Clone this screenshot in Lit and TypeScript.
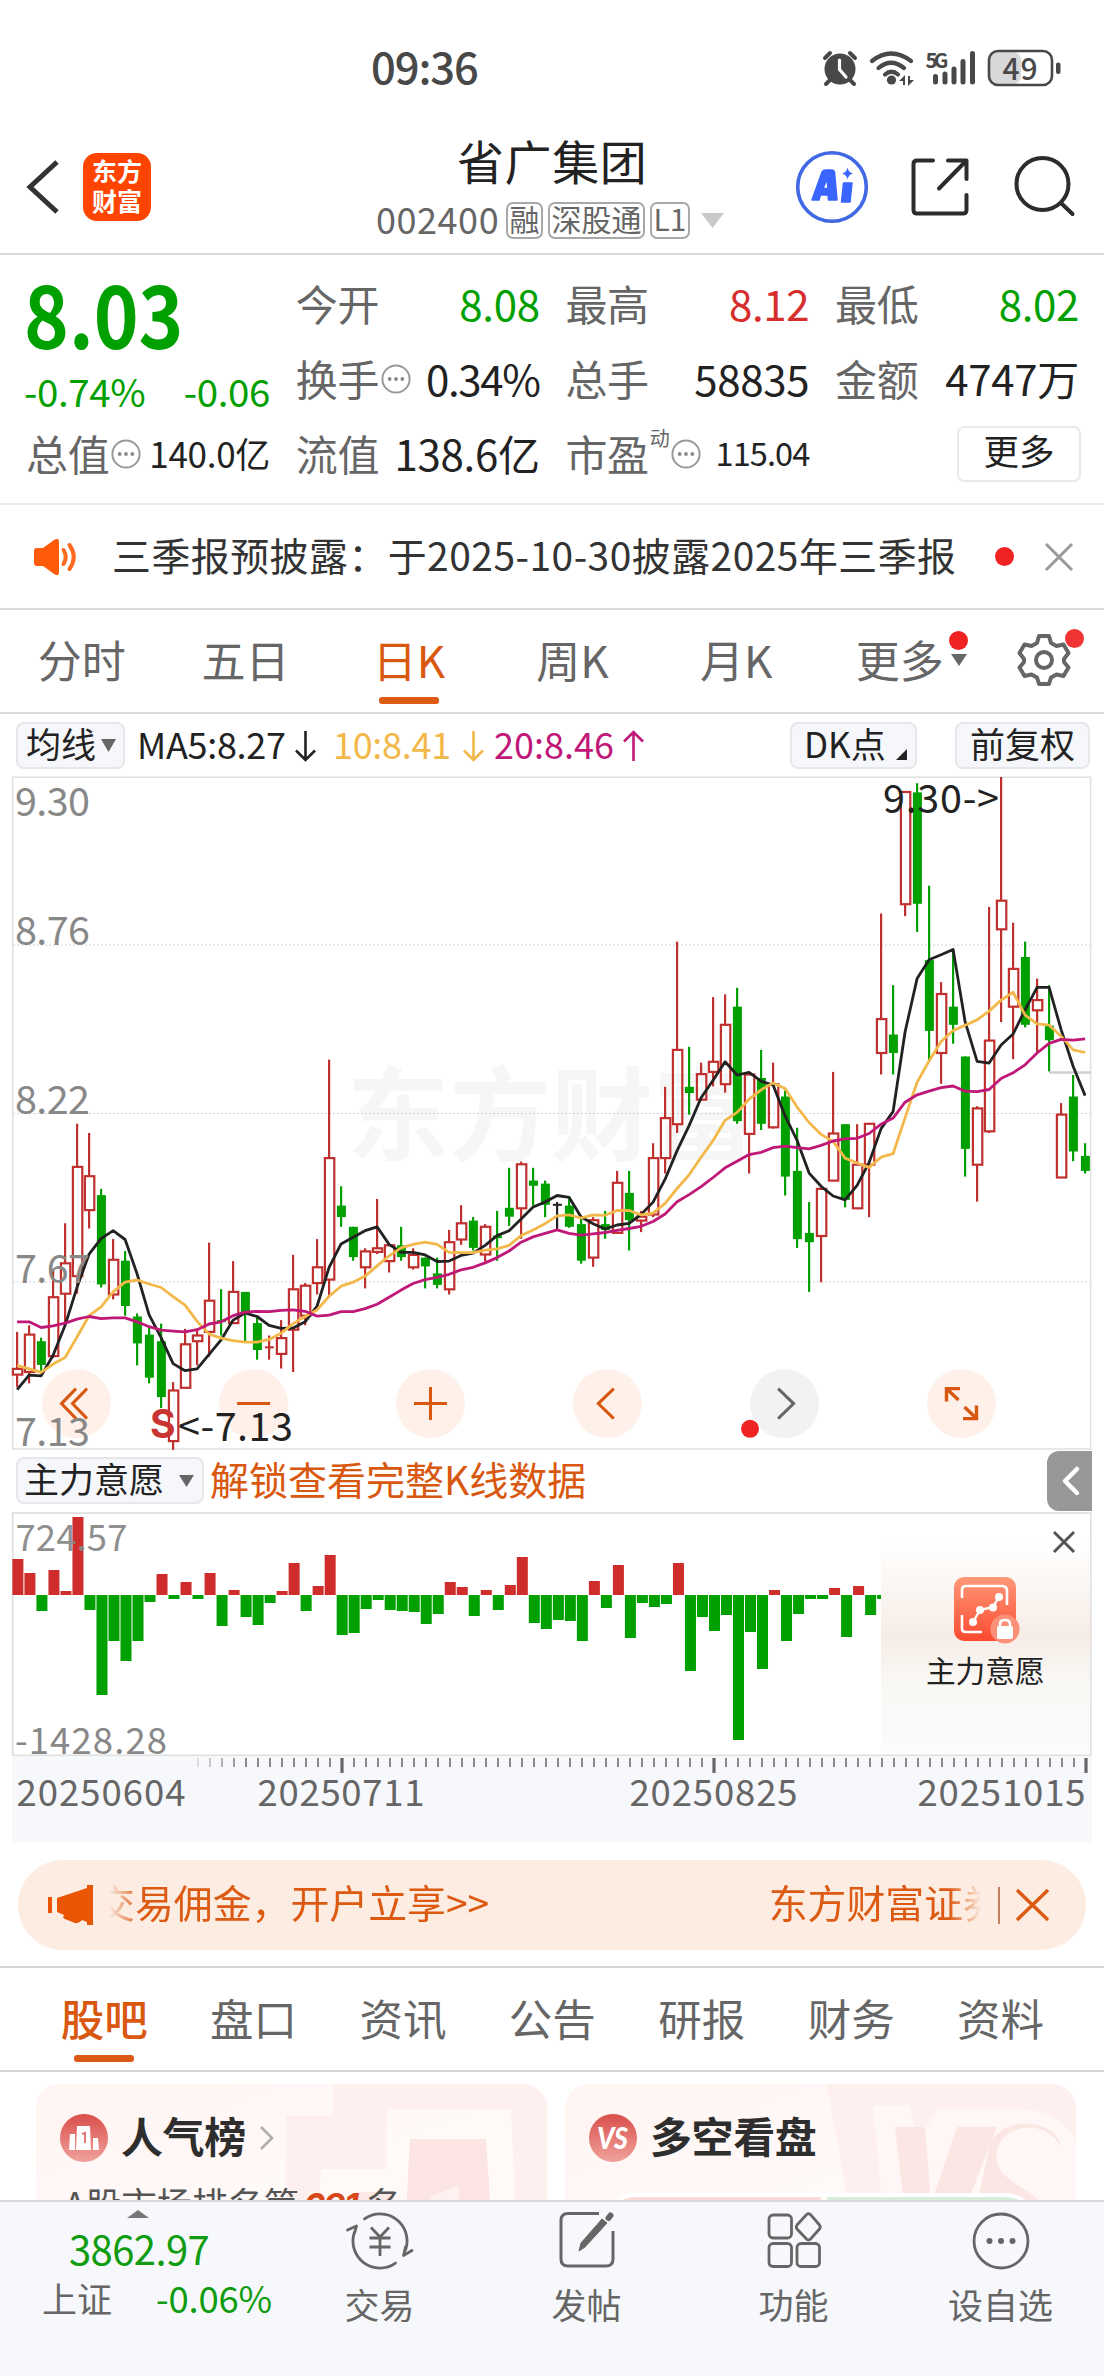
import { LitElement, html, svg, css } from "lit";
import { customElement } from "lit/decorators.js";

type Candle = [string, number, number, number, number];

// [kind, high, body top, body bottom, low] on the chart's own vertical units
const CANDLES: Candle[] = [
  ["r", 1277, 1361, 1374, 1402], ["r", 1262, 1283, 1368, 1394], ["g", 1290, 1298, 1352, 1365], ["r", 1137, 1198, 1332, 1336],
  ["r", 1030, 1121, 1190, 1262], ["r", 804, 902, 1150, 1190], ["r", 825, 923, 1000, 1042], ["g", 952, 966, 1169, 1176],
  ["r", 1066, 1113, 1192, 1203], ["g", 1093, 1115, 1218, 1240], ["g", 1235, 1242, 1303, 1353], ["g", 1268, 1283, 1381, 1394],
  ["g", 1258, 1298, 1425, 1450], ["r", 1391, 1410, 1525, 1545], ["r", 1270, 1305, 1404, 1404], ["r", 1272, 1285, 1298, 1353],
  ["r", 1074, 1206, 1277, 1333], ["g", 1180, 1250, 1254, 1285], ["r", 1116, 1186, 1257, 1257], ["g", 1186, 1186, 1235, 1300],
  ["g", 1240, 1257, 1318, 1340], ["r", 1285, 1312, 1312, 1340], ["r", 1250, 1291, 1327, 1360], ["r", 1102, 1180, 1272, 1368],
  ["r", 1166, 1172, 1240, 1262], ["r", 1066, 1130, 1166, 1192], ["r", 658, 882, 1158, 1197], ["g", 946, 990, 1016, 1038],
  ["g", 1038, 1038, 1107, 1115], ["r", 1087, 1094, 1130, 1178], ["r", 975, 1087, 1095, 1100], ["r", 1080, 1080, 1116, 1142],
  ["g", 1038, 1080, 1107, 1115], ["r", 1087, 1102, 1130, 1135], ["g", 1108, 1108, 1128, 1178], ["g", 1108, 1144, 1170, 1178],
  ["r", 1045, 1073, 1180, 1192], ["r", 989, 1030, 1067, 1079], ["g", 1016, 1024, 1086, 1092], ["r", 1032, 1038, 1101, 1117],
  ["g", 1002, 1058, 1064, 1115], ["g", 904, 995, 1015, 1036], ["r", 890, 896, 996, 1065], ["g", 904, 933, 945, 990],
  ["g", 933, 940, 988, 1016], ["k", 982, 988, 988, 1046], ["g", 970, 990, 1038, 1040], ["g", 1016, 1032, 1115, 1122],
  ["r", 1016, 1023, 1108, 1129], ["g", 1002, 1032, 1045, 1065], ["r", 911, 938, 1052, 1052], ["g", 911, 961, 1023, 1092],
  ["r", 1002, 1015, 1024, 1050], ["r", 848, 882, 1010, 1016], ["r", 720, 791, 882, 917], ["r", 390, 636, 805, 825],
  ["g", 629, 720, 734, 783], ["r", 665, 691, 749, 752], ["r", 516, 663, 686, 719], ["r", 510, 579, 714, 733],
  ["g", 495, 538, 798, 804], ["r", 690, 692, 827, 917], ["g", 636, 700, 804, 818], ["r", 665, 714, 812, 815],
  ["g", 728, 742, 924, 967], ["g", 813, 911, 1066, 1086], ["g", 982, 1052, 1073, 1186], ["r", 952, 952, 1059, 1164],
  ["r", 686, 826, 933, 933], ["g", 805, 805, 977, 994], ["r", 805, 897, 996, 996], ["r", 804, 804, 897, 1016],
  ["r", 326, 566, 643, 692], ["g", 489, 601, 643, 692], ["r", 50, 50, 305, 332], ["g", 30, 51, 304, 368],
  ["g", 263, 432, 593, 660], ["r", 482, 509, 643, 713], ["g", 410, 538, 579, 622], ["g", 651, 651, 861, 924],
  ["r", 764, 769, 897, 981], ["r", 311, 615, 821, 825], ["r", 16, 297, 362, 573], ["r", 347, 452, 538, 657],
  ["g", 390, 425, 579, 585], ["r", 474, 523, 546, 642], ["g", 489, 581, 614, 685], ["r", 757, 783, 926, 926],
  ["g", 693, 742, 867, 889], ["g", 848, 877, 911, 917],
];

const MA5 = [1408, 1375, 1377, 1330, 1262, 1175, 1100, 1065, 1047, 1067, 1145, 1238, 1290, 1349, 1365, 1361, 1328, 1295, 1250, 1234,
  1242, 1262, 1269, 1268, 1254, 1218, 1130, 1077, 1062, 1047, 1038, 1078, 1096, 1096, 1102, 1117, 1116, 1103, 1098, 1080, 1058, 1047,
  1020, 993, 982, 967, 971, 1016, 1031, 1043, 1034, 1030, 1010, 982, 930, 865, 808, 745, 705, 663, 693, 687, 707, 716, 786, 842, 916,
  946, 968, 977, 944, 892, 815, 776, 595, 474, 431, 420, 408, 572, 662, 666, 625, 600, 545, 494, 494, 590, 673, 740];
const MA10 = [1353, 1361, 1369, 1350, 1335, 1288, 1240, 1220, 1186, 1164, 1159, 1168, 1176, 1197, 1216, 1253, 1282, 1291, 1297, 1300,
  1300, 1294, 1280, 1258, 1242, 1227, 1196, 1173, 1164, 1150, 1127, 1104, 1086, 1078, 1073, 1078, 1096, 1097, 1097, 1091, 1088, 1080,
  1058, 1045, 1031, 1013, 1011, 1018, 1011, 1012, 1001, 1001, 1011, 1007, 985, 951, 920, 880, 842, 796, 778, 748, 727, 711, 724, 766,
  801, 828, 844, 882, 893, 903, 880, 872, 790, 710, 661, 617, 592, 580, 568, 548, 523, 505, 557, 577, 580, 605, 636, 642];
const MA20 = [1254, 1254, 1267, 1263, 1257, 1248, 1242, 1247, 1245, 1245, 1254, 1265, 1273, 1275, 1277, 1272, 1259, 1254, 1240, 1232,
  1230, 1231, 1228, 1227, 1230, 1241, 1239, 1231, 1231, 1224, 1214, 1198, 1182, 1167, 1158, 1153, 1146, 1136, 1130, 1120, 1108, 1093,
  1073, 1061, 1053, 1045, 1053, 1057, 1054, 1051, 1046, 1042, 1037, 1026, 1009, 981, 965, 947, 926, 904, 889, 874, 869, 858, 855, 858,
  861, 853, 843, 838, 837, 826, 805, 791, 755, 738, 730, 722, 718, 730, 731, 726, 701, 688, 670, 643, 621, 612, 614, 611];

// Signed bar lengths of the lower indicator, in pixels
const FLOW = [36, 22, -16, 25, 4, 78, -15, -100, -46, -66, -46, -7, 21, -4, 13, -4, 22, -31, 5, -22, -30, -8, 4, 32, -16, 9, 40, -40,
  -38, -14, -5, -15, -16, -17, -29, -19, 13, 8, -21, 5, -15, 10, 38, -28, -34, -25, -26, -46, 14, -13, 30, -43, -8, -12, -9, 32, -76,
  -22, -36, -20, -145, -37, -74, 5, -46, -19, -4, -4, 7, -42, 9, -20, -4];

const X = (i: number) => 17.1 + 12 * i;
const Y = (v: number) => Math.round((v * 0.44005 - 7) * 10) / 10;
const RED = "#c0302e";
const GREEN = "#00a000";

const line = (vals: number[], color: string) =>
  svg`<polyline points=${vals.map((v, i) => `${X(i)},${Y(v)}`).join(" ")} fill="none" stroke=${color} stroke-width="2.8" stroke-linejoin="round"/>`;

const candle = ([k, h, t, b, l]: Candle, i: number) => {
  const x = X(i), yt = Y(t), yb = Y(b);
  if (k === "g")
    return svg`<rect x=${x - 1.1} y=${Y(h)} width="2.2" height=${Y(l) - Y(h)} fill=${GREEN}/><rect x=${x - 4.2} y=${yt} width="9" height=${Math.max(2, yb - yt)} fill=${GREEN}/>`;
  if (k === "k" || t === b) {
    const c = k === "k" ? "#222" : RED;
    return svg`<rect x=${x - 1.1} y=${Y(h)} width="2.2" height=${Y(l) - Y(h)} fill=${c}/><rect x=${x - 4.2} y=${yt - 1} width="9" height="2" fill=${c}/>`;
  }
  return svg`<rect x=${x - 1.1} y=${Y(h)} width="2.2" height=${yt - Y(h)} fill=${RED}/><rect x=${x - 1.1} y=${yb} width="2.2" height=${Y(l) - yb} fill=${RED}/><rect x=${x - 4.2} y=${yt} width="9.4" height=${Math.max(1, yb - yt)} fill="none" stroke=${RED} stroke-width="2.2"/>`;
};

const info = html`<svg class="info" width="32" height="32" viewBox="0 0 32 32"><circle cx="16" cy="16" r="13.6" fill="none" stroke="#999" stroke-width="2"/><g fill="#888"><circle cx="9.7" cy="16" r="1.9"/><circle cx="16" cy="16" r="1.9"/><circle cx="22.3" cy="16" r="1.9"/></g></svg>`;

@customElement("app-root")
export class AppRoot extends LitElement {
  static styles = css`
    :host { display: block; width: 1104px; height: 2376px; overflow: hidden; background: #fff; color: #222;
      font-family: "Noto Sans CJK SC", sans-serif; font-size: 42px; line-height: 1; white-space: nowrap; }
    * { box-sizing: border-box; }
    svg { display: block; flex: none; overflow: visible; }
    .row { display: flex; align-items: center; }
    .status { height: 130px; padding: 0 46px 0 371px; color: #484848; }
    .clock { font-size: 43.5px; font-weight: 500; letter-spacing: -1.1px; height: 60px; line-height: 60px; width: 447.5px; margin-top: 2px; }
    .head { height: 125px; border-bottom: 2px solid #d9d9dc; padding-left: 26px; align-items: flex-start; }
    .logo { width: 68px; height: 68px; border-radius: 14px; background: #ff4400; color: #fff; margin: 23px 0 0 23px; flex: none;
      font-size: 25px; line-height: 30px; font-weight: 700; text-align: center; padding-top: 2px; }
    .logo div { height: 30px; }
    .name { width: 384px; flex: none; margin-left: 206px; }
    .title { font-size: 47px; line-height: 60px; height: 70px; margin-left: 100px; color: #222; letter-spacing: 0.6px; }
    .sub { color: #666; font-size: 36px; line-height: 36px; height: 38px; margin: 1px 0 0 19px; letter-spacing: 0.55px; }
    .code { width: 125px; margin-top: -4px; }
    .tag { border: 2px solid #a8a8a8; border-radius: 7px; height: 37px; font-size: 30px; line-height: 29px; padding: 0 1.5px; letter-spacing: 0; margin-left: 5px; }
    .quote { height: 250px; border-bottom: 2px solid #ececee; padding: 10px 26px 0; display: grid; grid-template-columns: repeat(4, 244px);
      column-gap: 25.7px; grid-template-rows: repeat(3, 75px); }
    .now { grid-row: span 2; color: #00a000; }
    .price { font-size: 87px; font-weight: 700; line-height: 90px; height: 93px; padding-top: 1px; transform: scaleX(0.875); transform-origin: 0 0; margin-left: -2px; }
    .chg { display: flex; justify-content: space-between; font-size: 38.5px; line-height: 50px; letter-spacing: -0.4px; margin: 7px 0 0 -2px; }
    .cell { display: flex; align-items: center; justify-content: space-between; color: #222; letter-spacing: -0.3px; }
    .cell .k { color: #666; display: flex; align-items: center; }
    .info { margin: 2px 0 0 1px; }
    .v { text-align: right; }
    .g { color: #00a000; }
    .r { color: #d62d2d; }
    .s35 { font-size: 35px; }
    .s33 { font-size: 32.5px; letter-spacing: -0.9px; }
    .sup { font-size: 20px; margin: -30px 0 0 1px; }
    .more { width: 124px; height: 56px; border: 2px solid #e8e9ec; border-radius: 7px; justify-self: end; margin: 11px -2px 0 0;
      font-size: 35.5px; line-height: 44px; text-align: center; }
    .notice { height: 105px; border-bottom: 2px solid #d9d9dc; padding: 0 30px 0 32px; }
    .ntext { font-size: 38.9px; width: 863px; margin-left: 31px; color: #333; height: 60px; line-height: 55px; letter-spacing: 0.5px; }
    .reddot { width: 19px; height: 19px; border-radius: 50%; background: #f02222; }
    .tabs { height: 104px; border-bottom: 2px solid #d9d9dc; color: #666; font-size: 44px; }
    .tab { width: 163.6px; height: 102px; line-height: 98px; text-align: center; position: relative; flex: none; }
    .on { color: #d9580f; font-weight: 500; }
    .on::after { content: ""; position: absolute; left: 50%; margin-left: -30px; bottom: 8px; width: 60px; height: 7px; border-radius: 3px; background: #dc5a12; }
    .tabs .dot { position: absolute; width: 19px; height: 19px; border-radius: 50%; background: #f02222; }
    .ma { height: 63px; padding: 0 14px 0 16px; font-size: 36px; }
    .btn { background: #f6f7fa; border: 2px solid #e6e7ea; border-radius: 8px; height: 47px; display: flex; align-items: center; color: #222; font-size: 35px; }
    .btn span { margin-top: -6px; }
    .ma b { font-weight: 400; display: flex; align-items: center; letter-spacing: -0.3px; margin-top: -5px; }
    .ma b svg { margin-top: 5px; }
    .ind { height: 63px; padding-left: 16px; color: #d9580f; font-size: 39px; }
    .side { margin-left: auto; margin-right: 12px; width: 45px; height: 60px; border-radius: 12px 0 0 12px; background: #989898; display: flex; align-items: center; padding-left: 15px; }
    .vol { height: 245px; position: relative; }
    .lock { position: absolute; left: 881px; top: 2px; width: 208.5px; height: 240px; display: flex; flex-direction: column; align-items: center;
      background: linear-gradient(#fff 10%, #fbf6f2 32%, #f6ece6 50%, #faf8f5 70%, #fdfbfb 100%); font-size: 29.7px; }
    .lock svg.ic { margin: 62px 0 0 1px; }
    .lock .x { position: absolute; right: 15px; top: 17px; }
    .lock div { margin-top: 11px; }
    .axis { height: 85px; margin: 0 12px; background: #f7f8fb; }
    .promo { margin: 18px 18px 0; height: 90px; border-radius: 45px; background: #fcece2; color: #dc5a12; font-size: 38.9px; padding: 0 20px 0 29px; }
    .mq { display: flex; justify-content: space-between; overflow: hidden; width: 874px; margin-left: 15px; height: 62px; line-height: 55px;
      -webkit-mask-image: linear-gradient(90deg, transparent 0, #000 32px, #000 840px, transparent 872px); }
    .mq span:first-child { margin-left: -13px; }
    .mq span:last-child { margin-right: -19px; }
    .div { width: 1.5px; height: 37px; background: #c08060; margin: 0 16px 0 15px; }
    .nav { margin-top: 16px; border-top: 2px solid #d6d6da; border-bottom: 2px solid #d6d6da; height: 106px; padding-left: 29.5px; color: #666; font-size: 43.5px; }
    .nav .tab { width: 149.4px; line-height: 100px; height: 102px; }
    .cards { display: flex; gap: 18px; padding: 12px 28px 0 36px; height: 128px; overflow: hidden; }
    .card { width: 511px; height: 240px; flex: none; border-radius: 24px; background: linear-gradient(160deg, #fff5f3, #fffaf8 55%); position: relative; overflow: hidden; padding: 27px 0 0 24px; color: #2e2e2e; }
    .deco { position: absolute; left: 0; top: 0; }
    .ct { font-size: 42px; font-weight: 700; position: relative; height: 54px; line-height: 46px; }
    .ct span { margin: -7px 14px 0 13px; letter-spacing: -0.4px; }
    .rank { position: relative; font-size: 35.6px; color: #555; margin: 12px 0 0 4px; line-height: 52px; }
    .rank i { color: #d8481a; font-weight: 700; font-size: 34px; font-family: Inter, sans-serif; letter-spacing: -1.6px; margin: 0 9px 0 4px; }
    .foot { height: 176px; background: #f7f8fb; border-top: 2px solid #d6d8dc; display: flex; color: #666; font-size: 35px; }
    .idx { width: 276px; color: #109c10; position: relative; padding-top: 8px; }
    .idx .n { font-size: 40px; letter-spacing: -0.6px; line-height: 60px; height: 47px; margin: 0 0 0 69px; }
    .idx .m { display: flex; justify-content: space-between; margin: 7px 4px 0 42px; line-height: 52px; }
    .idx .m span:first-child { color: #666; }
    .idx .m span:last-child { font-size: 36.5px; letter-spacing: -0.2px; }
    .act { width: 207px; display: flex; flex-direction: column; align-items: center; padding-top: 8px; }
    .act span { line-height: 52px; margin-top: 8px; }
  `;

  chart() {
    const btn = (cx: number, icon: unknown, fill = "#ffefe7") => svg`<circle cx=${cx} cy="626.6" r="34.5" fill=${fill} fill-opacity="0.92"/><g transform="translate(${cx},626.6)" fill="none" stroke="#d9580f" stroke-width="3">${icon}</g>`;
    const labels: [string, number][] = [["9.30", 38.5], ["8.76", 168], ["8.22", 337], ["7.67", 505.5], ["7.13", 668.5]];
    return html`<svg width="1104" height="672" viewBox="0 0 1104 672" font-family="Noto Sans CJK SC, sans-serif">
      <text x="347" y="376" font-size="102" font-weight="700" fill="#f6f6f6" textLength="408">东方财富</text>
      ${[168, 336.5, 505].map((y) => svg`<line x1="13" x2="1090" y1=${y} y2=${y} stroke="#d2d2d2" stroke-width="1" stroke-dasharray="2 2"/>`)}
      <rect x="12.7" y="0.2" width="1078" height="671.8" fill="none" stroke="#e2e2e4" stroke-width="1.6"/>
      <line x1="1049" x2="1091" y1="295.5" y2="295.5" stroke="#cdcfd3" stroke-width="2.4"/>
      ${CANDLES.map(candle)}
      ${line(MA5, "#222")}${line(MA10, "#f3b84a")}${line(MA20, "#bf1878")}
      ${btn(76.5, svg`<path d="M-0.5-15L-15 0L-0.5 15M10.5-15L-4 0L10.5 15"/>`)}
      ${btn(253.6, svg`<path d="M-16.5 0H16.5"/>`)}
      ${btn(430.5, svg`<path d="M-16.5 0H16.5M0-16.5V16.5"/>`)}
      ${btn(607.3, svg`<path d="M6.5-15L-9 0L6.5 15"/>`)}
      ${btn(784.6, svg`<path stroke="#666" d="M-6.5-15L9 0L-6.5 15"/>`, "#f1f1f1")}
      ${btn(961.5, svg`<path stroke-width="3.4" d="M-15-2V-15H-1.5M-14.5-14.5L-3-3.5M15 2V15H1.5M14.5 14.5L3 3.5"/>`)}
      <circle cx="750" cy="651.8" r="9" fill="#f02222"/>
      ${labels.map(([t, y]) => svg`<text x="15" y=${y} font-size="39.5" fill="#888" textLength="75" lengthAdjust="spacing">${t}</text>`)}
      <text x="883" y="36" font-size="39.5" fill="#222" textLength="116">9.30-&gt;</text>
      <text x="178" y="664" font-size="39.5" fill="#222" textLength="115">&lt;-7.13</text>
      <text x="150" y="660.5" font-size="39" font-weight="700" font-family="Inter, sans-serif" fill="#c93532">S</text>
    </svg>`;
  }

  volume() {
    return html`<div class="vol"><svg width="1104" height="245" viewBox="0 0 1104 245" font-family="Noto Sans CJK SC, sans-serif">
      <rect x="12.7" y="1" width="1078" height="242.4" fill="none" stroke="#e0e0e2" stroke-width="1.8"/>
      ${FLOW.map((v, i) => svg`<rect x=${12.4 + 12.01 * i} y=${v > 0 ? 83 - v : 83} width="11" height=${Math.abs(v)} fill=${v > 0 ? "#cf2d2b" : GREEN}/>`)}
      <text x="15.5" y="39" font-size="36.5" fill="#888" fill-opacity="0.95" textLength="112">724.57</text>
      <text x="15" y="242" font-size="36.5" fill="#888" textLength="152">-1428.28</text>
      </svg>
      <div class="lock">
        <svg class="x" width="22" height="22" viewBox="0 0 22 22"><path d="M1 1L21 21M21 1L1 21" stroke="#555" stroke-width="3"/></svg>
        <svg class="ic" width="66" height="68" viewBox="0 0 66 68">
          <defs><linearGradient id="lg" x2="0" y2="1"><stop stop-color="#ff9878"/><stop offset="1" stop-color="#fb4a30"/></linearGradient></defs>
          <rect x="1" y="1" width="62" height="64" rx="10" fill="url(#lg)"/>
          <path d="M9 22V14Q9 10 13 10H49Q54 10 54 15V29M9 39V53Q9 56 13 56H29" fill="none" stroke="#fff" stroke-width="2.6"/>
          <path d="M20 46L27 34L40 31L46 21" fill="none" stroke="#fff" stroke-width="2.4"/>
          <g fill="#fff"><circle cx="20" cy="46" r="4"/><circle cx="27" cy="34" r="4"/><circle cx="40" cy="31.5" r="4"/><circle cx="46" cy="21" r="4"/></g>
          <circle cx="52" cy="53" r="14.5" fill="#fb9079"/><rect x="44" y="50" width="16" height="13" rx="2" fill="#fff"/>
          <path d="M47 51V48Q47 44 52 44T57 48V51" fill="none" stroke="#fff" stroke-width="2.6"/>
        </svg>
        <div>主力意愿</div>
      </div>
    </div>
    <div class="axis"><svg width="1080" height="85" viewBox="12 0 1080 85" font-family="Noto Sans CJK SC, sans-serif">
      ${Array.from({ length: 75 }, (_, k) => {
        const big = k === 12 || k === 43 || k === 74;
        return svg`<rect x=${198 + 12.0 * k - (big ? 1.6 : 1)} y="1" width=${big ? 3.2 : 2} height=${big ? 15 : 9} fill=${big ? "#666" : "#888"} opacity=${Math.min(1, 0.25 + k * 0.19)}/>`;
      })}
      <g font-size="36.5" fill="#666">
      <text x="16.5" y="49" textLength="169">20250604</text><text x="257.5" y="49" textLength="167">20250711</text>
      <text x="629.5" y="49" textLength="168">20250825</text><text x="917.5" y="49" textLength="168">20251015</text></g>
    </svg></div>`;
  }

  render() {
    return html`
      <div class="status row">
        <div class="clock">09:36</div>
        <svg width="240" height="38" viewBox="0 0 240 38" fill="#484848" style="margin-top:6px">
          <circle cx="22" cy="20" r="15.5"/><path d="M13 30L8 35M31 30L36 35M7 9L12 4M37 9L32 4" stroke="#484848" stroke-width="4" stroke-linecap="round"/>
          <path d="M21.5 11V20.5L28 28" stroke="#fff" stroke-width="3.2" fill="none" stroke-linecap="round"/>
          <g fill="none" stroke="#484848" stroke-width="4.2" stroke-linecap="round"><path d="M54 12Q73-3 93 12"/><path d="M60.5 19Q73 8.5 86 19"/><path d="M67 25.5Q73.5 20 80 25.5"/></g>
          <circle cx="73.5" cy="31" r="4.6"/><path d="M81 32L87 26V36H85V32ZM96 31L90 37V27H92V31Z"/>
          <text x="107.5" y="18.5" font-size="20.5" font-weight="700" font-family="Noto Sans CJK SC, sans-serif" textLength="23">5G</text>
          <g stroke="#484848" stroke-width="5" stroke-linecap="round"><path d="M117.5 27.5V33M127 25V33M136 20V33M145 12.5V33M154.5 4.5V33"/></g>
          <rect x="172" y="3" width="31" height="32" rx="8" fill="#d8d8d8"/><rect x="171" y="2" width="63" height="34" rx="9" fill="none" stroke="#484848" stroke-width="2.6"/>
          <rect x="238" y="13.5" width="4.5" height="11.5" rx="2"/>
          <text x="184.5" y="30.5" font-size="30" font-weight="500" font-family="Noto Sans CJK SC, sans-serif" textLength="35">49</text>
        </svg>
      </div>
      <div class="head row">
        <svg width="34" height="56" viewBox="0 0 34 56" style="margin-top:29px"><path d="M31 3L4 28L31 53" fill="none" stroke="#333" stroke-width="5"/></svg>
        <div class="logo"><div>东方</div><div>财富</div></div>
        <div class="name">
          <div class="title">省广集团</div>
          <div class="sub row"><div class="code">002400</div><span class="tag">融</span><span class="tag">深股通</span><span class="tag">L1</span>
            <svg width="24" height="15" viewBox="0 0 24 15" style="margin-left:11px"><path d="M0 0H23L11.5 15Z" fill="#c9c9c9"/></svg></div>
        </div>
        <svg width="290" height="74" viewBox="0 0 290 74" style="margin:20px 0 0 54px">
          <circle cx="37" cy="37" r="34.3" fill="none" stroke="#4068e4" stroke-width="3.6"/>
          <path d="M17 50L27 22Q28 20 31 20H37Q39 20 39.5 22L42 50H33.5L33 45H25.5L24 50ZM28 38.5H33L32 29Z" fill="#3a66ff" stroke="#3a66ff" stroke-width="1.5" stroke-linejoin="round"/>
          <path d="M48.5 33H57L55 52H46.5Z" fill="#3a66ff" stroke="#3a66ff" stroke-width="1.5" stroke-linejoin="round"/><path d="M52.5 17.5Q53.5 22.5 58 23.5Q53.5 24.5 52.5 29.5Q51.5 24.5 47 23.5Q51.5 22.5 52.5 17.5Z" fill="#3a66ff"/>
          <g fill="none" stroke="#2c2c2c" stroke-width="4" stroke-linecap="round" stroke-linejoin="round"><path d="M138 10.5H122Q118.5 10.5 118.5 14V60Q118.5 63.5 122 63.5H168Q171.5 63.5 171.5 60V45M153 10.5H171.5V29M170 12L144 38.5"/>
          <circle cx="247.5" cy="34" r="26"/><path d="M266 53L277.5 64"/></g>
        </svg>
      </div>
      <div class="quote">
        <div class="now"><div class="price">8.03</div><div class="chg"><span>-0.74%</span><span>-0.06</span></div></div>
        <div class="cell"><span class="k">今开</span><span class="v g">8.08</span></div>
        <div class="cell"><span class="k">最高</span><span class="v r">8.12</span></div>
        <div class="cell"><span class="k">最低</span><span class="v g">8.02</span></div>
        <div class="cell"><span class="k">换手${info}</span><span class="v" style="letter-spacing:-1.3px">0.34%</span></div>
        <div class="cell"><span class="k">总手</span><span class="v">58835</span></div>
        <div class="cell"><span class="k">金额</span><span class="v">4747万</span></div>
        <div class="cell"><span class="k">总值${info}</span><span class="v s35">140.0亿</span></div>
        <div class="cell"><span class="k">流值</span><span class="v">138.6亿</span></div>
        <div class="cell"><span class="k">市盈<span class="sup">动</span>${info}</span><span class="v s33">115.04</span></div>
        <div class="more">更多</div>
      </div>
      <div class="notice row">
        <svg width="49" height="38" viewBox="0 0 49 38"><path d="M2 13Q2 10 5 10H11L22 2Q27-1 27 4V34Q27 39 22 36L11 28H5Q2 28 2 25Z" fill="#ff5a0a"/><path d="M31.5 12Q36 19 31.5 26M37.5 7Q46 19 37.5 31" fill="none" stroke="#ff6a20" stroke-width="4" stroke-linecap="round"/></svg>
        <div class="ntext">三季报预披露：于2025-10-30披露2025年三季报</div>
        <div class="reddot" style="margin-left:20px"></div>
        <svg width="28" height="28" viewBox="0 0 28 28" style="margin-left:31px"><path d="M1 1L27 27M27 1L1 27" stroke="#999" stroke-width="3"/></svg>
      </div>
      <div class="tabs row">
        <div class="tab">分时</div><div class="tab">五日</div><div class="tab on" style="font-weight:400">日K</div><div class="tab">周K</div><div class="tab">月K</div>
        <div class="tab">更多<span class="dot" style="left:131px;top:21px"></span></div>
        <svg width="16" height="12" viewBox="0 0 16 12" style="margin:-3px 0 0 -31px"><path d="M0 0H16L8 12Z" fill="#666"/></svg>
        <svg width="54" height="52" viewBox="0 0 54 52" style="margin:-3px 0 0 50px"><path d="M22 2H32L34 9L39.5 12L46.5 10.5L51.5 19L47 25V28L51.5 33.5L46.5 42L39.5 40.5L34 43.5L32 50H22L20 43.5L14.5 40.5L7.5 42L2.5 33.5L7 28V25L2.5 19L7.5 10.5L14.5 12L20 9Z" fill="none" stroke="#666" stroke-width="4" stroke-linejoin="round"/><circle cx="27" cy="26" r="8" fill="none" stroke="#666" stroke-width="4"/><circle cx="57.5" cy="4.5" r="9.5" fill="#f03434"/></svg>
      </div>
      <div class="ma row">
        <div class="btn" style="width:109px;padding-left:8px"><span>均线</span><svg width="15" height="13" viewBox="0 0 15 13" style="margin-left:5px"><path d="M0 0H15L7.5 13Z" fill="#666"/></svg></div>
        <b style="margin-left:12px;width:196px">MA5:8.27<svg width="21" height="32" viewBox="0 0 21 32" style="margin-left:9px"><path d="M10.5 1V30M1 20.5L10.5 30L20 20.5" fill="none" stroke="#222" stroke-width="2.6"/></svg></b>
        <b style="color:#f3b84a;width:161px">10:8.41<svg width="21" height="32" viewBox="0 0 21 32" style="margin-left:12px"><path d="M10.5 1V30M1 20.5L10.5 30L20 20.5" fill="none" stroke="#f3b84a" stroke-width="2.6"/></svg></b>
        <b style="color:#bf1878;letter-spacing:0">20:8.46<svg width="21" height="32" viewBox="0 0 21 32" style="margin-left:9px"><path d="M10.5 31V2M1 11.5L10.5 2L20 11.5" fill="none" stroke="#bf1878" stroke-width="2.6"/></svg></b>
        <div class="btn" style="margin-left:auto;width:127px;padding-left:12px"><span>DK点</span><svg width="11" height="11" viewBox="0 0 11 11" style="margin:17px 0 0 10px"><path d="M11 0V11H0Z" fill="#222"/></svg></div>
        <div class="btn" style="margin-left:38px;width:135px;padding-left:13px"><span>前复权</span></div>
      </div>
      ${this.chart()}
      <div class="ind row">
        <div class="btn" style="width:188px;padding-left:6px;margin-right:6px"><span>主力意愿</span><svg width="15" height="12" viewBox="0 0 15 12" style="margin-left:15px"><path d="M0 0H15L7.5 12Z" fill="#666"/></svg></div>
        <span style="margin-top:-4px">解锁查看完整K线数据</span>
        <div class="side"><svg width="18" height="28" viewBox="0 0 18 28"><path d="M15 2L3 14L15 26" fill="none" stroke="#fff" stroke-width="4.5" stroke-linecap="round" stroke-linejoin="round"/></svg></div>
      </div>
      ${this.volume()}
      <div class="promo row">
        <svg width="47" height="40" viewBox="0 0 47 40" fill="#ea5504"><rect x="1" y="12" width="4" height="16"/><path d="M10 13L40 3V0H46V40H40V37L35 35Q32 39 28 38L18 34Q15 33 17 30L10 27Z"/></svg>
        <div class="mq"><span>交易佣金，开户立享&gt;&gt;</span><span>东方财富证券</span></div>
        <div class="div"></div>
        <svg width="33" height="32" viewBox="0 0 33 32"><path d="M1 1L32 31M32 1L1 31" stroke="#dc5a12" stroke-width="3.4"/></svg>
      </div>
      <div class="nav row">
        <div class="tab on">股吧</div><div class="tab">盘口</div><div class="tab">资讯</div><div class="tab">公告</div><div class="tab">研报</div><div class="tab">财务</div><div class="tab">资料</div>
      </div>
      <div class="cards">
        <div class="card">
          <svg class="deco" width="511" height="130" viewBox="0 0 511 130"><path d="M250 32H297V0H511V130H480L475 25H350V85H285L282 130H250Z" fill="#fdf0ee"/><path d="M374 55H450L455 130H370Z" fill="#fbe4e1"/><path d="M395 112L423 102V130H395Z" fill="#fef2f0"/><path d="M320 108H358V130H320Z" fill="#fbe8e4"/></svg>
          <div class="ct row"><svg width="48" height="48" viewBox="0 0 48 48"><defs><linearGradient id="rg" x2="0" y2="1"><stop stop-color="#d94f4b"/><stop offset="1" stop-color="#f0a29d"/></linearGradient></defs><circle cx="24" cy="24" r="24" fill="url(#rg)"/><path d="M10 20H15V36H9ZM17 12H30L31 36H16ZM33 24H38L39 36H33Z" fill="#fff"/><path d="M22 20L25 19V29" fill="none" stroke="#e27b76" stroke-width="2"/></svg>
            <span>人气榜</span><svg width="14" height="24" viewBox="0 0 14 24"><path d="M1 1L12 12L1 23" fill="none" stroke="#b0aeae" stroke-width="2.6"/></svg></div>
          <div class="rank">A股市场排名第<i>691</i>名</div>
        </div>
        <div class="card">
          <svg class="deco" width="511" height="130" viewBox="0 0 511 130"><path d="M262 0H511V130H285Z" fill="#fdf0ee"/><path d="M308 22H345L352 60L372 25H430Q500 20 511 60V130H318Z" fill="#fef7f5"/><path d="M330 43H360L366 120L392 43H432L398 130H340Z" fill="#fbe6e3"/><path d="M496 62Q480 40 458 44Q428 50 432 80Q436 92 460 106Q480 118 484 130H456Q455 118 430 110L410 130L425 60Q436 38 465 40Q490 42 496 62Z" fill="#fbe6e3"/>
            <rect x="41" y="109" width="430" height="60" rx="30" fill="#fff"/><path d="M72 113H256V130H46Q52 113 72 113Z" fill="#fbd9d6"/><path d="M262 113H440Q460 113 466 130H261Z" fill="#d8eedb"/></svg>
          <div class="ct row"><svg width="48" height="48" viewBox="0 0 48 48"><circle cx="24" cy="24" r="24" fill="url(#rg2)"/><defs><linearGradient id="rg2" x2="0" y2="1"><stop stop-color="#d94f4b"/><stop offset="1" stop-color="#f0a29d"/></linearGradient></defs><text x="8" y="35" font-size="31" font-weight="900" font-style="italic" fill="#fff" font-family="Lato, sans-serif" textLength="31" lengthAdjust="spacingAndGlyphs">VS</text></svg>
            <span>多空看盘</span></div>
        </div>
      </div>
      <div class="foot">
        <div class="idx"><svg width="22" height="8" viewBox="0 0 22 8" style="margin-left:127px"><path d="M0 8L11 0L22 8Z" fill="#777"/></svg>
          <div class="n">3862.97</div><div class="m"><span>上证</span><span>-0.06%</span></div></div>
        <div class="act"><svg width="66" height="60" viewBox="0 0 66 60" fill="none" stroke="#666" stroke-width="2.8" stroke-linecap="round"><path d="M17.5 8.9A27 27 0 0 1 58.5 40M48.5 53.1A27 27 0 0 1 7.5 22M0.5 20L9.5 16L7.5 23M58.5 37L56.5 45.5L65 40.5" stroke-linejoin="round"/><path d="M24 17.5L33 27L42 17.5M22.5 28H43.5M22.5 37H43.5M33 27V46" stroke-linecap="butt"/></svg><span>交易</span></div>
        <div class="act"><svg width="56" height="60" viewBox="0 0 56 60" fill="none" stroke="#666" stroke-width="3"><path d="M40 3.5H9Q2 3.5 2 10.5V49Q2 56 9 56H47Q54 56 54 49V21"/><path d="M20 41L22 33L43 9L48 13L26 37Z" fill="#666" stroke-width="1"/><path d="M49.5 8L51.5 5.5" stroke-width="6" stroke-linecap="round"/></svg><span>发帖</span></div>
        <div class="act"><svg width="56" height="60" viewBox="0 0 56 60" fill="none" stroke="#666" stroke-width="2.8"><rect x="3" y="5" width="22.5" height="23" rx="4"/><rect x="3" y="33.5" width="22.5" height="23" rx="4"/><rect x="31" y="33.5" width="22.5" height="23" rx="4"/><path d="M40.5 4.5Q42.5 3 44.5 4.5L53.5 15Q55 17 53.5 19L44.5 29Q42.5 31 40.5 29L31 19Q29.5 17 31 15Z"/></svg><span>功能</span></div>
        <div class="act"><svg width="58" height="60" viewBox="0 0 58 60"><circle cx="29" cy="31" r="27" fill="none" stroke="#666" stroke-width="2.8"/><g fill="#666"><circle cx="17.5" cy="31" r="3"/><circle cx="29" cy="31" r="3"/><circle cx="40.5" cy="31" r="3"/></g></svg><span>设自选</span></div>
      </div>`;
  }
}
